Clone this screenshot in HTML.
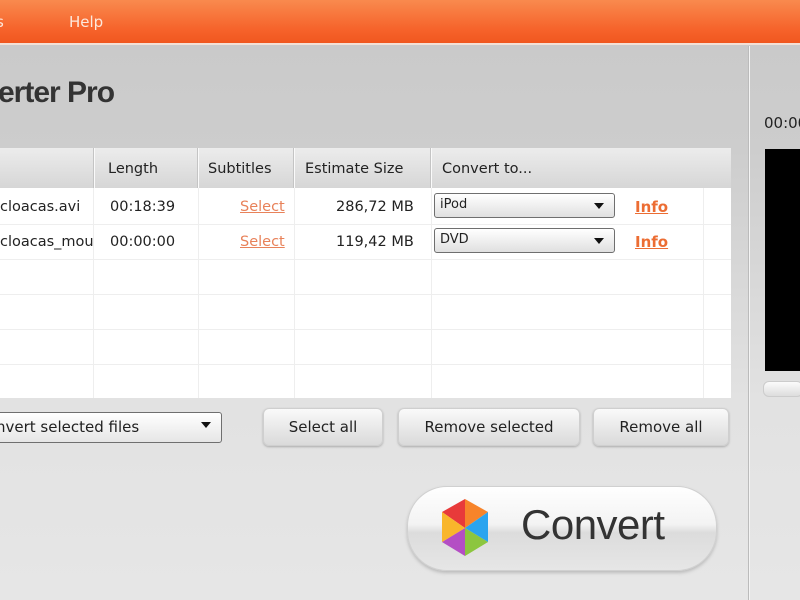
<!DOCTYPE html>
<html><head><style>
*{margin:0;padding:0;box-sizing:border-box}
body{width:800px;height:600px;overflow:hidden;font-family:"DejaVu Sans","Liberation Sans",sans-serif;background:linear-gradient(#c9c9c9 0px,#cdcdcd 150px,#e2e2e2 400px,#e6e6e6 600px);position:relative;color:#222}
.top{position:absolute;left:0;top:0;width:800px;height:45px;background:linear-gradient(#f98a4e,#f6622a 70%,#f0571f);border-bottom:2px solid #f3e0d6}
.top span{position:absolute;top:13px;color:#fde8dc;font-size:15px}
.sep{position:absolute;left:748px;top:46px;width:2px;height:554px;background:#f4f4f4;border-left:1px solid #bbb}
.title{position:absolute;left:-2px;top:76px;font-family:"Liberation Sans",sans-serif;font-weight:bold;font-size:30px;color:#333;letter-spacing:-1px}
.tbl{position:absolute;left:0;top:148px;width:731px;height:250px;background:#fff}
.hd{position:absolute;left:0;top:0;width:731px;height:40px;background:linear-gradient(#ececec,#d6d6d6)}
.vl{position:absolute;top:0;width:1px;height:250px;background:#eee}
.vh{position:absolute;top:0;width:2px;height:40px;background:#fafafa;border-left:1px solid #c4c4c4}
.hl{position:absolute;left:0;width:731px;height:1px;background:#eee}
.t{position:absolute;font-size:14.5px;white-space:nowrap}
.lk{color:#e8825a;text-decoration:underline}
.lkb{color:#ec6d33;text-decoration:underline;font-weight:bold;font-size:15px}
.dd{position:absolute;height:25px;border:1.5px solid #6f6f6f;border-radius:3px;background:linear-gradient(#fff,#e0e0e0);font-size:13px;padding:3px 5px}
.dd:after{content:"";position:absolute;right:10px;top:9px;border:5px solid transparent;border-top:6px solid #111}
.btn{position:absolute;top:408px;height:38px;border-radius:6px;background:linear-gradient(#fafafa,#e6e6e6 60%,#dadada);border:1px solid #cfcfcf;box-shadow:0 1px 2px #aaa;font-size:15px;text-align:center;line-height:36px}
.conv{position:absolute;left:407px;top:486px;width:310px;height:85px;border-radius:40px;background:linear-gradient(#fff,#f3f3f3 45%,#dcdcdc 55%,#e6e6e6);border:1px solid #d0d0d0;box-shadow:0 2px 3px #bbb}
.conv span{position:absolute;left:113px;top:14px;font-family:"Liberation Sans",sans-serif;font-size:42px;color:#333;letter-spacing:-0.5px}
</style></head><body>
<div class="top"><span style="left:-4px">s</span><span style="left:69px">Help</span></div>
<div class="sep"></div>
<div class="title">erter Pro</div>
<div class="tbl">
<div class="hd"></div>
<div class="vh" style="left:93px"></div><div class="vh" style="left:197px"></div><div class="vh" style="left:293px"></div><div class="vh" style="left:430px"></div>
<div class="vl" style="left:93px;top:40px;height:210px"></div><div class="vl" style="left:198px;top:40px;height:210px"></div><div class="vl" style="left:294px;top:40px;height:210px"></div><div class="vl" style="left:431px;top:40px;height:210px"></div><div class="vl" style="left:703px;top:40px;height:210px"></div>
<div class="hl" style="top:76px"></div><div class="hl" style="top:111px"></div><div class="hl" style="top:146px"></div><div class="hl" style="top:181px"></div><div class="hl" style="top:216px"></div>
<div class="t" style="left:108px;top:13px">Length</div>
<div class="t" style="left:208px;top:13px">Subtitles</div>
<div class="t" style="left:305px;top:13px">Estimate Size</div>
<div class="t" style="left:442px;top:13px">Convert to...</div>
<div class="t" style="left:0;top:51px">cloacas.avi</div>
<div class="t" style="left:110px;top:51px">00:18:39</div>
<div class="t lk" style="left:240px;top:51px">Select</div>
<div class="t" style="left:336px;top:51px">286,72 MB</div>
<div class="dd" style="left:434px;top:45px;width:181px">iPod</div>
<div class="t lkb" style="left:635px;top:50px">Info</div>
<div class="t" style="left:0;top:86px">cloacas_mou</div>
<div class="t" style="left:110px;top:86px">00:00:00</div>
<div class="t lk" style="left:240px;top:86px">Select</div>
<div class="t" style="left:336px;top:86px">119,42 MB</div>
<div class="dd" style="left:434px;top:80px;width:181px">DVD</div>
<div class="t lkb" style="left:635px;top:85px">Info</div>
</div>
<div class="dd" style="left:-10px;top:412px;width:232px;height:31px;font-size:15px;padding-top:5px;background:linear-gradient(#fff,#e6e6e6)">nvert selected files</div>
<div class="btn" style="left:263px;width:120px">Select all</div>
<div class="btn" style="left:398px;width:182px">Remove selected</div>
<div class="btn" style="left:593px;width:136px">Remove all</div>
<div class="conv">
<svg style="position:absolute;left:30px;top:11px" width="54" height="60" viewBox="0 0 54 60">
<polygon points="27,30 27,1 4,14" fill="#e83a3a"/>
<polygon points="27,30 27,1 50,14" fill="#f7842a"/>
<polygon points="27,30 50,14 50,44" fill="#2aa4ef"/>
<polygon points="27,30 50,44 27,58" fill="#8cc63f"/>
<polygon points="27,30 27,58 4,44" fill="#b44ec4"/>
<polygon points="27,30 4,44 4,14" fill="#f9b62b"/>
</svg>
<span>Convert</span></div>
<div class="t" style="left:764px;top:114px;font-size:15px">00:00</div>
<div style="position:absolute;left:765px;top:149px;width:40px;height:222px;background:#000"></div>
<div style="position:absolute;left:763px;top:381px;width:40px;height:16px;border-radius:6px;background:linear-gradient(#fbfbfb,#ddd);border:1px solid #ccc"></div>
</body></html>
